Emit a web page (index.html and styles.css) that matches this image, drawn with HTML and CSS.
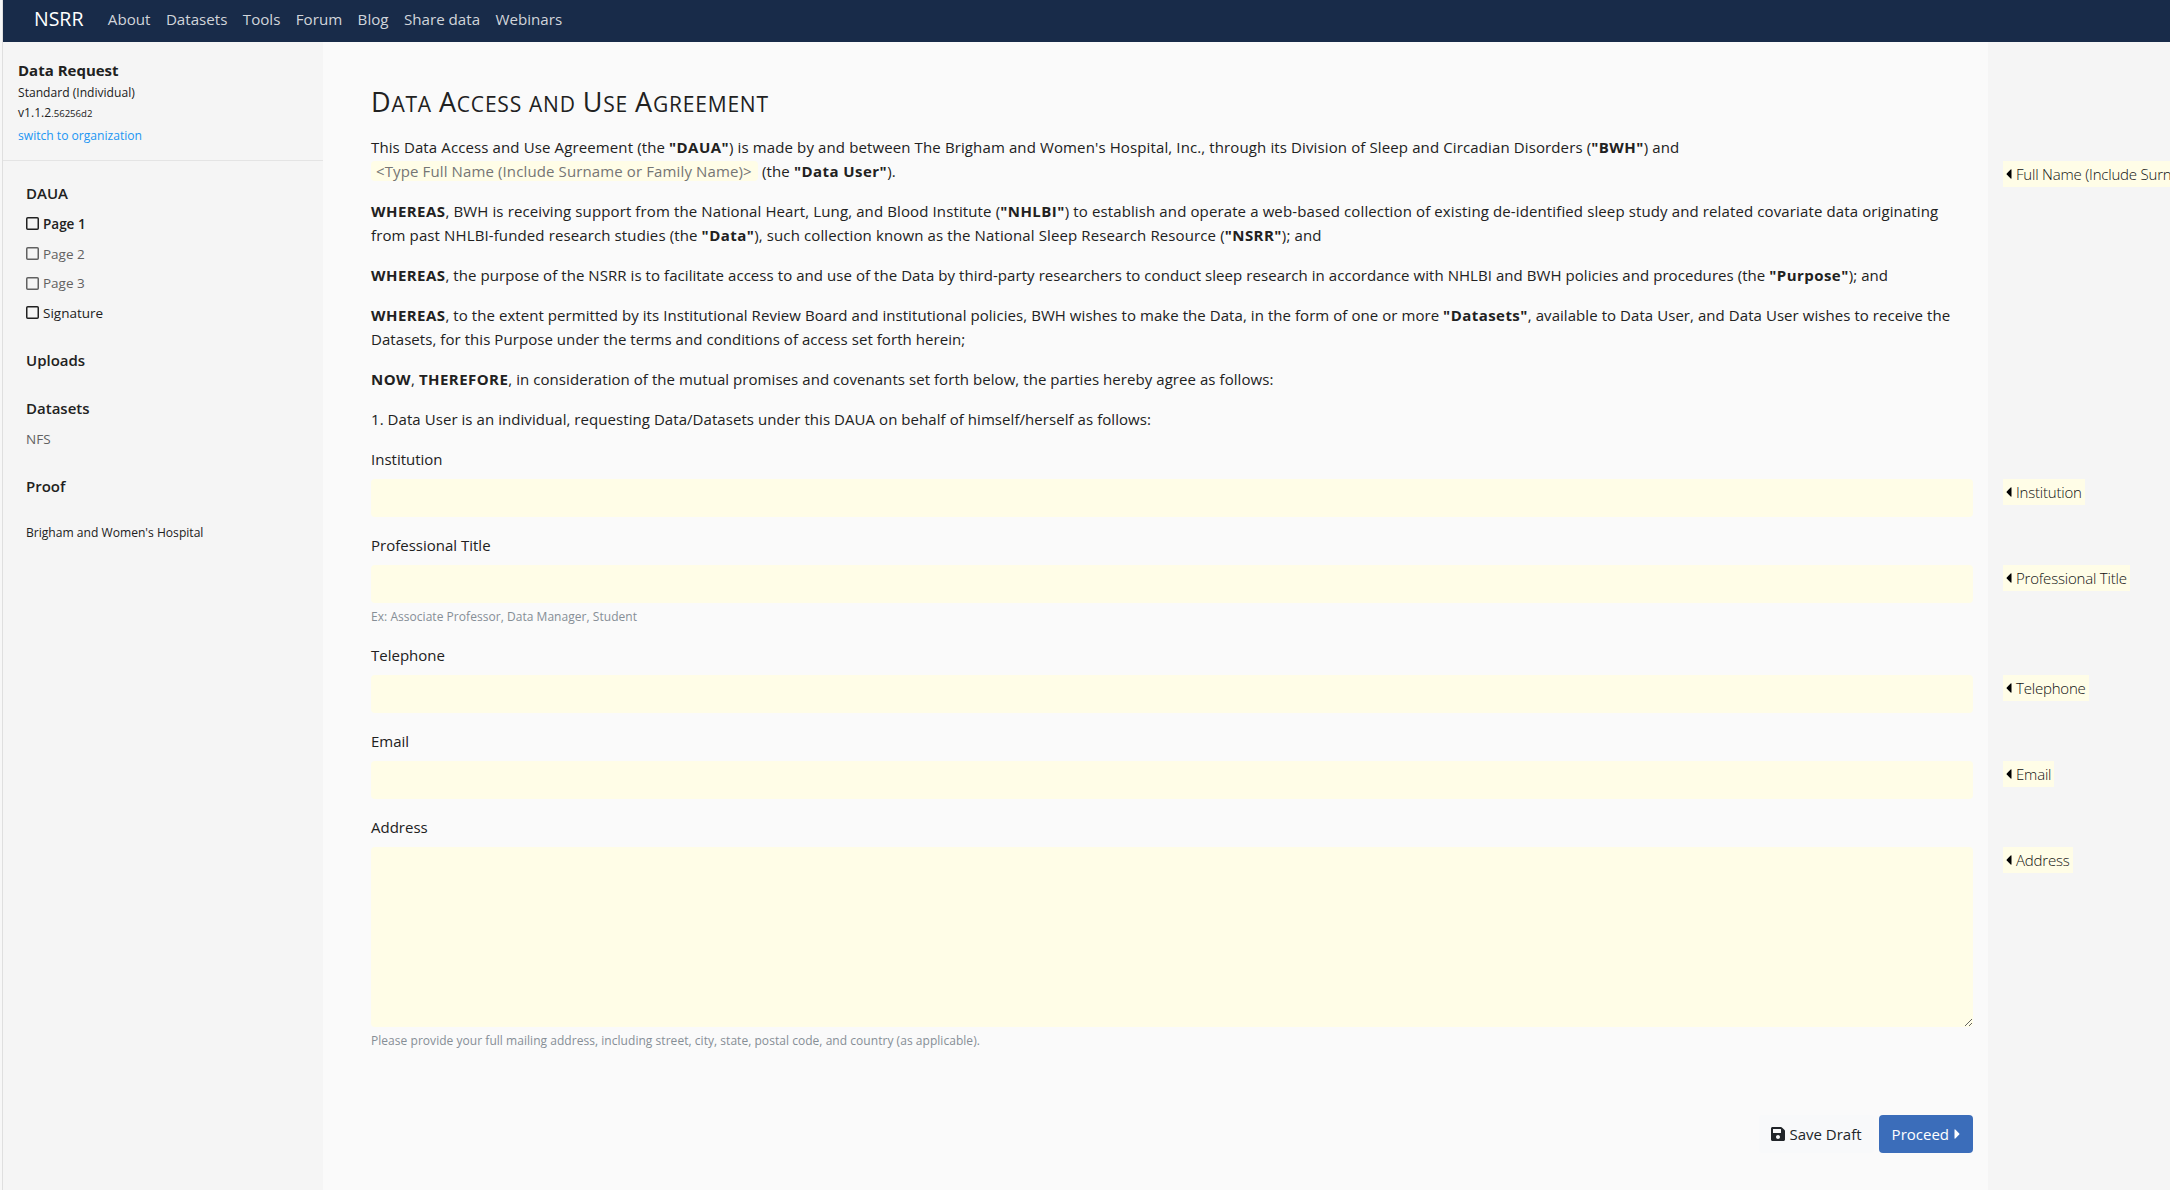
FILE: index.html
```html
<!DOCTYPE html>
<html lang="en">
<head>
  <meta charset="UTF-8">
  <meta name="viewport" content="width=device-width, initial-scale=1.0">
  <title>Data Access and Use Agreement - NSRR</title>
  <link rel="stylesheet" href="styles.css">
</head>
<body>
  <!-- Top navigation -->
  <nav class="navbar">
    <a class="brand" href="#">NSRR</a>
    <a href="#">About</a>
    <a href="#">Datasets</a>
    <a href="#">Tools</a>
    <a href="#">Forum</a>
    <a href="#">Blog</a>
    <a href="#">Share data</a>
    <a href="#">Webinars</a>
  </nav>

  <div class="page">
    <!-- Sidebar -->
    <div class="sidebar">
      <div class="request-info">
        <div class="request-title">Data Request</div>
        <div>Standard (Individual)</div>
        <div>v1.1.2<span class="build">.56256d2</span></div>
        <a href="#">switch to organization</a>
      </div>
      <div class="steps">
        <h4>DAUA</h4>
        <a class="step current" href="#"><svg class="box" viewBox="0 0 13 13"><rect x="0.75" y="0.75" width="11.5" height="11.5" rx="1"/></svg>Page 1</a>
        <a class="step muted" href="#"><svg class="box" viewBox="0 0 13 13"><rect x="0.75" y="0.75" width="11.5" height="11.5" rx="1"/></svg>Page 2</a>
        <a class="step muted" href="#"><svg class="box" viewBox="0 0 13 13"><rect x="0.75" y="0.75" width="11.5" height="11.5" rx="1"/></svg>Page 3</a>
        <a class="step" href="#"><svg class="box" viewBox="0 0 13 13"><rect x="0.75" y="0.75" width="11.5" height="11.5" rx="1"/></svg>Signature</a>
        <h4>Uploads</h4>
        <h4>Datasets</h4>
        <a class="step muted" href="#">NFS</a>
        <h4>Proof</h4>
        <p class="hospital">Brigham and Women's Hospital</p>
      </div>
    </div>

    <!-- Agreement -->
    <form class="agreement">
      <h1><span>Data</span> <span>Access</span> <span class="lower">and</span> <span>Use</span> <span>Agreement</span></h1>
      <p class="recital">This Data Access and Use Agreement (the <b>"DAUA"</b>) is made by and between The Brigham and Women's Hospital, Inc., through its Division of Sleep and Circadian Disorders (<b>"BWH"</b>) and <br><input class="inline-input" type="text" placeholder="&lt;Type Full Name (Include Surname or Family Name)&gt;"> (the <b>"Data User"</b>).</p>
      <p class="recital"><b>WHEREAS</b>, BWH is receiving support from the National Heart, Lung, and Blood Institute (<b>"NHLBI"</b>) to establish and operate a web-based collection of existing de-identified sleep study and related covariate data originating <br>from past NHLBI-funded research studies (the <b>"Data"</b>), such collection known as the National Sleep Research Resource (<b>"NSRR"</b>); and</p>
      <p><b>WHEREAS</b>, the purpose of the NSRR is to facilitate access to and use of the Data by third-party researchers to conduct sleep research in accordance with NHLBI and BWH policies and procedures (the <b>"Purpose"</b>); and</p>
      <p><b>WHEREAS</b>, to the extent permitted by its Institutional Review Board and institutional policies, BWH wishes to make the Data, in the form of one or more <b>"Datasets"</b>, available to Data User, and Data User wishes to receive the Datasets, for this Purpose under the terms and conditions of access set forth herein;</p>
      <p><b>NOW</b>, <b>THEREFORE</b>, in consideration of the mutual promises and covenants set forth below, the parties hereby agree as follows:</p>
      <p>1. Data User is an individual, requesting Data/Datasets under this DAUA on behalf of himself/herself as follows:</p>

      <div class="form-group">
        <label for="institution">Institution</label>
        <input id="institution" class="form-control" type="text">
      </div>
      <div class="form-group">
        <label for="title">Professional Title</label>
        <input id="title" class="form-control" type="text">
        <small>Ex: Associate Professor, Data Manager, Student</small>
      </div>
      <div class="form-group">
        <label for="telephone">Telephone</label>
        <input id="telephone" class="form-control" type="text">
      </div>
      <div class="form-group">
        <label for="email">Email</label>
        <input id="email" class="form-control" type="text">
      </div>
      <div class="form-group">
        <label for="address">Address</label>
        <textarea id="address" class="form-control"></textarea>
        <small>Please provide your full mailing address, including street, city, state, postal code, and country (as applicable).</small>
      </div>

      <div class="actions">
        <button class="btn btn-light" type="button">
          <svg class="save-icon" viewBox="0 0 448 512"><path fill="currentColor" d="M433.9 129.9l-83.9-83.9A48 48 0 0 0 316.1 32H48C21.5 32 0 53.5 0 80v352c0 26.5 21.5 48 48 48h352c26.5 0 48-21.5 48-48V163.9a48 48 0 0 0-14.1-34zM224 416c-35.3 0-64-28.7-64-64s28.7-64 64-64 64 28.7 64 64-28.7 64-64 64zm96-304.5V212c0 6.6-5.4 12-12 12H76c-6.6 0-12-5.4-12-12V108c0-6.6 5.4-12 12-12h228.5c3.2 0 6.2 1.3 8.5 3.5l3.5 3.5A12 12 0 0 1 320 111.5z"/></svg>
          <span>Save Draft</span>
        </button>
        <button class="btn btn-primary" type="button">
          <span>Proceed</span>
          <svg class="caret" viewBox="0 0 6 12"><path fill="currentColor" d="M0 1.2Q0 0 1 .7L5.7 5.3Q6.2 6 5.7 6.7L1 11.3Q0 12 0 10.8z"/></svg>
        </button>
      </div>
    </form>

    <!-- Missing fields -->
    <div class="notes">
      <div class="note"><svg class="caret" viewBox="0 0 6 12"><path d="M6 1.2Q6 0 5 .7L.3 5.3Q-.2 6 .3 6.7L5 11.3Q6 12 6 10.8z"/></svg><span>Full Name (Include Surname or Family Name)</span></div>
      <div class="note"><svg class="caret" viewBox="0 0 6 12"><path d="M6 1.2Q6 0 5 .7L.3 5.3Q-.2 6 .3 6.7L5 11.3Q6 12 6 10.8z"/></svg><span>Institution</span></div>
      <div class="note"><svg class="caret" viewBox="0 0 6 12"><path d="M6 1.2Q6 0 5 .7L.3 5.3Q-.2 6 .3 6.7L5 11.3Q6 12 6 10.8z"/></svg><span>Professional Title</span></div>
      <div class="note"><svg class="caret" viewBox="0 0 6 12"><path d="M6 1.2Q6 0 5 .7L.3 5.3Q-.2 6 .3 6.7L5 11.3Q6 12 6 10.8z"/></svg><span>Telephone</span></div>
      <div class="note"><svg class="caret" viewBox="0 0 6 12"><path d="M6 1.2Q6 0 5 .7L.3 5.3Q-.2 6 .3 6.7L5 11.3Q6 12 6 10.8z"/></svg><span>Email</span></div>
      <div class="note"><svg class="caret" viewBox="0 0 6 12"><path d="M6 1.2Q6 0 5 .7L.3 5.3Q-.2 6 .3 6.7L5 11.3Q6 12 6 10.8z"/></svg><span>Address</span></div>
    </div>
  </div>
</body>
</html>
```
FILE: styles.css
```css
/* General Styling */
* {
  box-sizing: border-box;
}

body {
  margin: 0;
  padding-left: 2px;
  height: 1190px;
  overflow: hidden;
  font-family: "Segoe UI", "Open Sans", sans-serif;
  font-size: 15px;
  line-height: 24px;
  color: #212121;
  background-color: #f7f7f7;
}

a {
  color: inherit;
  text-decoration: none;
}

/* Navbar */
.navbar {
  display: flex;
  align-items: center;
  gap: 15.4px;
  height: 42px;
  padding: 0 0 4px 31px;
  border-left: 1px solid #dfdfdf;
  background-color: #182b49;
  color: #d1d5db;
  font-size: 15.15px;
}

.navbar .brand {
  margin-right: 9px;
  font-size: 19.5px;
  color: #fff;
}

.page {
  display: flex;
  height: 1148px;
  border-left: 1px solid #dfdfdf;
}

/* Sidebar */
.sidebar {
  width: 320px;
  background-color: #f5f5f5;
}

.request-info {
  height: 119px;
  padding: 16px 15px 0;
  border-bottom: 1px solid #e4e4e4;
  font-size: 12.1px;
  line-height: 20px;
}

.request-title {
  font-size: 15px;
  font-weight: bold;
  line-height: 25px;
}

.request-info .build {
  font-size: 9.6px;
}

.request-info a {
  display: block;
  line-height: 24px;
  color: #2196f3;
}

.steps {
  padding: 20px 23px;
}

.steps h4 {
  margin: 0 0 4px;
  font-size: 15px;
  font-weight: 600;
}

.step {
  display: flex;
  align-items: center;
  gap: 4px;
  height: 29.7px;
  font-size: 13.5px;
}

.step + h4 {
  margin-top: 20px;
}

.steps h4 + h4 {
  margin-top: 24px;
}

.steps h4:last-of-type {
  margin-top: 21px;
}

.step.current {
  font-weight: 600;
}

.step.muted {
  color: #616161;
}

.box {
  width: 13px;
  height: 13px;
  fill: none;
  stroke: currentColor;
  stroke-width: 1.5;
}

.hospital {
  margin: 23px 0 0;
  font-size: 12.1px;
}

/* Agreement */
.agreement {
  width: 1665px;
  padding: 43px 15px 0 48px;
  background-color: #fafafa;
}

.agreement h1 {
  height: 34px;
  margin: 0 0 16px;
  font-size: 27px;
  font-weight: normal;
  line-height: 34px;
}

/* Small capitals with a taller ratio than the browser's own */
.agreement h1 span {
  display: inline-block;
  font-size: 21px;
  letter-spacing: 0.8px;
  text-transform: uppercase;
}

.agreement h1 span::first-letter {
  font-size: 27px;
}

.agreement h1 .lower::first-letter {
  font-size: 21px;
}

.agreement p {
  margin: 0 0 16px;
  letter-spacing: 0.06px;
}

.agreement .recital {
  letter-spacing: 0.12px;
}

.agreement b {
  letter-spacing: 0.45px;
}

.inline-input {
  width: 387px;
  height: 20px;
  padding: 0 5px;
  border: 0;
  border-radius: 4px;
  background-color: #fffde7;
  font: inherit;
  letter-spacing: inherit;
}

.inline-input::placeholder {
  color: #757575;
}

.form-group {
  margin-bottom: 16px;
}

.form-group label {
  display: block;
  margin-bottom: 8px;
}

.form-control {
  display: block;
  width: 100%;
  height: 38px;
  border: 0;
  border-radius: 4px;
  background-color: #fffde7;
  font: inherit;
}

textarea.form-control {
  height: 180px;
}

.form-group small {
  display: block;
  margin-top: 4px;
  font-size: 12px;
  letter-spacing: 0.04px;
  line-height: 20px;
  color: #868e96;
}

.actions {
  display: flex;
  justify-content: flex-end;
  gap: 5px;
  margin-top: 64px;
}

.btn {
  display: flex;
  align-items: center;
  gap: 4px;
  height: 38px;
  padding: 0 13px;
  border: 0;
  border-radius: 4px;
  font: inherit;
}

.btn-light {
  padding: 0 12px;
  background-color: #f8f9fa;
  color: #212529;
}

.btn-primary {
  gap: 5px;
  background-color: #3b6dba;
  color: #fff;
}

.save-icon {
  width: 14px;
  height: 16px;
}

.caret {
  flex: none;
  width: 6px;
  height: 10px;
}

/* Notes beside the fields */
.notes {
  flex: 1;
  display: grid;
  grid-template-rows: 318px 86px 110px 86px 86px auto;
  align-items: start;
  justify-items: start;
  min-width: 0;
  padding: 119px 0 0 15px;
  overflow: hidden;
  background-color: #f5f5f5;
}

.note {
  display: flex;
  align-items: center;
  gap: 4px;
  height: 26px;
  padding: 0 3px;
  font-weight: 300;
  letter-spacing: -0.2px;
  white-space: nowrap;
  color: #111;
  background-color: #fffde7;
}
```
